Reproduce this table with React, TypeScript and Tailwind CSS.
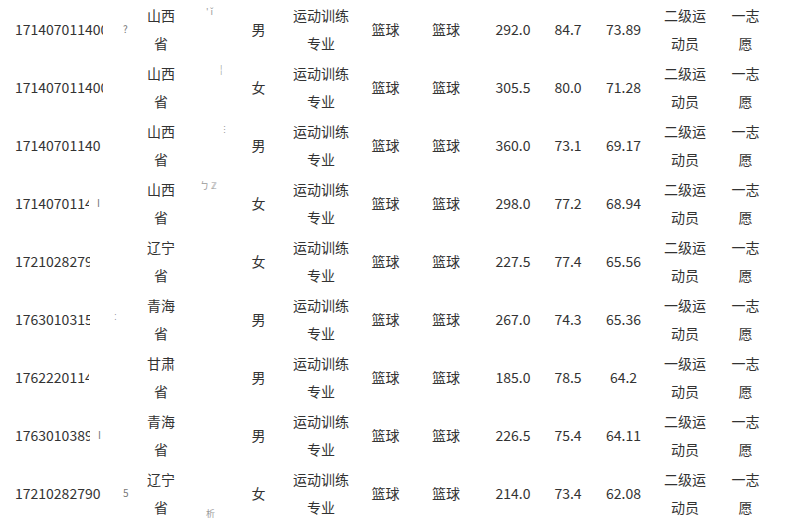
import React from "react";

type Row = {
  id: string;
  clip: string;
  prov: string;
  sex: string;
  score: string;
  a: string;
  b: string;
  level: string;
  frag?: string;
  fragPos?: string;
  idFrag?: string;
  idFragPos?: string;
};

const rows: Row[] = [
  { id: "171407011400", clip: "w-[88px]", prov: "山西省", sex: "男", score: "292.0", a: "84.7", b: "73.89", level: "二级运动员", frag: "' ǐ", fragPos: "items-start pt-[6px] pl-[14px]", idFrag: "?", idFragPos: "ml-[20px]" },
  { id: "171407011400", clip: "w-[88px]", prov: "山西省", sex: "女", score: "305.5", a: "80.0", b: "71.28", level: "二级运动员", frag: "¦", fragPos: "items-start pt-[6px] pl-[28px]" },
  { id: "17140701140", clip: "w-[88px]", prov: "山西省", sex: "男", score: "360.0", a: "73.1", b: "69.17", level: "二级运动员", frag: "⋮", fragPos: "items-start pt-[8px] pl-[28px]" },
  { id: "17140701142", clip: "w-[74px]", prov: "山西省", sex: "女", score: "298.0", a: "77.2", b: "68.94", level: "二级运动员", frag: "ㄅ  ℤ", fragPos: "items-start pt-[6px] pl-[8px]", idFrag: "I", idFragPos: "ml-[8px]" },
  { id: "1721028279", clip: "w-[75px]", prov: "辽宁省", sex: "女", score: "227.5", a: "77.4", b: "65.56", level: "二级运动员" },
  { id: "1763010315", clip: "w-[75px]", prov: "青海省", sex: "男", score: "267.0", a: "74.3", b: "65.36", level: "一级运动员", idFrag: "ː", idFragPos: "ml-[24px] -mt-[6px]" },
  { id: "1762220114", clip: "w-[74px]", prov: "甘肃省", sex: "男", score: "185.0", a: "78.5", b: "64.2", level: "一级运动员" },
  { id: "1763010389", clip: "w-[75px]", prov: "青海省", sex: "男", score: "226.5", a: "75.4", b: "64.11", level: "二级运动员", idFrag: "I", idFragPos: "ml-[8px]" },
  { id: "17210282790", clip: "w-[88px]", prov: "辽宁省", sex: "女", score: "214.0", a: "73.4", b: "62.08", level: "二级运动员", frag: "析", fragPos: "items-end pb-[2px] pl-[14px]", idFrag: "5", idFragPos: "ml-[20px]" },
];

function Cell({ children, w }: { children: React.ReactNode; w?: string }) {
  return (
    <div className="flex items-center justify-center text-center">
      <div className={w ? w : ""}>{children}</div>
    </div>
  );
}

export default function App() {
  return (
    <div
      className="w-[791px] h-[522px] bg-white text-[#333] text-[14px] leading-[28px] overflow-hidden"
      style={{ fontFamily: '"Noto Sans CJK SC", "Microsoft YaHei", sans-serif' }}
    >
      {rows.map((r, i) => (
        <div
          key={i}
          className="grid h-[58px] grid-cols-[130px_62px_40px_53px_72px_57px_64px_70px_40px_71px_52px_69px]"
        >
          <div className="flex items-center pl-[15px]">
            <div className={`${r.clip} overflow-hidden whitespace-nowrap`}>{r.id}</div>
            {r.idFrag ? (
              <span className={`${r.idFragPos ?? ""} text-[10px] text-[#777]`}>{r.idFrag}</span>
            ) : null}
          </div>
          <Cell w="w-[29px]">{r.prov}</Cell>
          <div className={`flex ${r.fragPos ?? ""} text-[9px] leading-[12px] text-[#999]`}>
            {r.frag ?? ""}
          </div>
          <Cell>{r.sex}</Cell>
          <Cell w="w-[57px]">运动训练专业</Cell>
          <Cell>篮球</Cell>
          <Cell>篮球</Cell>
          <Cell>{r.score}</Cell>
          <Cell>{r.a}</Cell>
          <Cell>{r.b}</Cell>
          <Cell w="w-[43px]">{r.level}</Cell>
          <Cell w="w-[29px]">一志愿</Cell>
        </div>
      ))}
    </div>
  );
}
